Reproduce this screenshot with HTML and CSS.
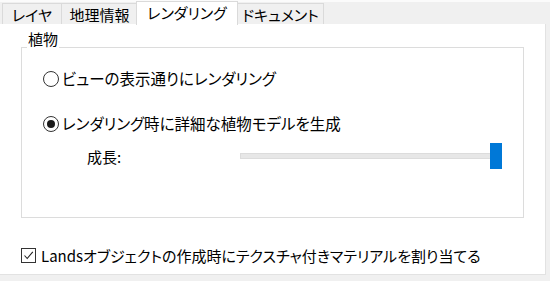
FILE: index.html
```html
<!DOCTYPE html>
<html lang="ja">
<head>
    <meta charset="UTF-8">
    <meta name="viewport" content="width=device-width, initial-scale=1.0">
    <title>レンダリング</title>
    <link rel="stylesheet" href="styles.css">
</head>
<body>
    <div class="window">
        <div class="tabs">
            <div class="tab tab-layer">レイヤ</div>
            <div class="tab tab-geo">地理情報</div>
            <div class="tab tab-render active">レンダリング</div>
            <div class="tab tab-doc">ドキュメント</div>
        </div>

        <div class="panel">
            <fieldset class="group">
                <legend>植物</legend>

                <label class="radio">
                    <span class="radio-mark"></span>
                    ビューの表示通りにレンダリング
                </label>

                <label class="radio">
                    <span class="radio-mark checked"></span>
                    レンダリング時に詳細な植物モデルを生成
                </label>

                <div class="slider-row">
                    <span class="slider-label">成長:</span>
                    <div class="slider">
                        <div class="track"></div>
                        <div class="thumb"></div>
                    </div>
                </div>
            </fieldset>

            <label class="check">
                <span class="check-mark">
                    <svg width="11" height="11" viewBox="0 0 11 11">
                        <path d="M1.5 5.5 L4.2 8.5 L9.8 1.8" fill="none" stroke="#222" stroke-width="1.1"/>
                    </svg>
                </span>
                Landsオブジェクトの作成時にテクスチャ付きマテリアルを割り当てる
            </label>
        </div>
    </div>
</body>
</html>
```

FILE: styles.css
```css
body {
    margin: 0;
    background-color: #f0f0f0;
    font-family: "Noto Sans CJK JP", "Noto Sans", sans-serif;
    font-size: 15px;
    font-feature-settings: "palt";
    color: #000;
}

.window {
    width: 550px;
    height: 281px;
    border-top: 2px solid #fbfbfb;
    box-sizing: border-box;
}

.tabs {
    display: flex;
    align-items: flex-end;
    height: 22px;
    padding-left: 2px;
}

.tab {
    height: 21px;
    box-sizing: border-box;
    border: 1px solid #dadada;
    border-bottom: none;
    margin-right: -1px;
    background-color: #f0f0f0;
    display: flex;
    align-items: center;
    justify-content: center;
    line-height: 1;
}

.tab-layer { width: 60px; }
.tab-geo { width: 77px; }
.tab-render { width: 102px; }
.tab-doc { width: 87px; }

.tab.active {
    height: 24px;
    margin-bottom: -1px;
    margin-left: -1px;
    margin-right: -1px;
    background-color: #fff;
    position: relative;
    z-index: 1;
    padding-bottom: 2px;
}

.panel {
    width: 546px;
    height: 251px;
    box-sizing: border-box;
    background-color: #fff;
    border-right: 1px solid #e2e2e2;
    border-bottom: 1px solid #e2e2e2;
    padding: 7px 0 0 21px;
}

.group {
    width: 503px;
    height: 187px;
    box-sizing: border-box;
    margin: 0;
    border: 1px solid #dcdcdc;
    padding: 6px 0 0 21px;
    display: flex;
    flex-direction: column;
}

.group legend {
    padding: 0 1px 16px;
    margin-left: -16px;
    line-height: 16px;
}

.radio {
    display: flex;
    align-items: center;
    height: 20px;
    line-height: 1;
    font-size: 15.5px;
}

.radio + .radio {
    margin-top: 25px;
}

.radio-mark {
    width: 14px;
    height: 14px;
    border: 1px solid #333;
    border-radius: 50%;
    margin-right: 3px;
    display: flex;
    align-items: center;
    justify-content: center;
}

.radio-mark.checked::after {
    content: '';
    width: 8px;
    height: 8px;
    border-radius: 50%;
    background-color: #1a1a1a;
}

.slider-row {
    display: flex;
    align-items: center;
    margin-top: 9px;
    padding-left: 44px;
}

.slider-label {
    width: 153px;
    line-height: 1;
}

.slider {
    position: relative;
    width: 262px;
    height: 26px;
    display: flex;
    align-items: center;
}

.track {
    width: 100%;
    height: 4px;
    background-color: #e7e7e7;
    border: 1px solid #dcdcdc;
}

.thumb {
    position: absolute;
    right: 0;
    top: 0;
    width: 12px;
    height: 26px;
    background-color: #0078d7;
}

.check {
    display: flex;
    align-items: center;
    margin-top: 30px;
    line-height: 1;
}

.check-mark {
    width: 13px;
    height: 13px;
    border: 1px solid #333;
    margin-right: 5px;
    display: flex;
    align-items: center;
    justify-content: center;
}
```
